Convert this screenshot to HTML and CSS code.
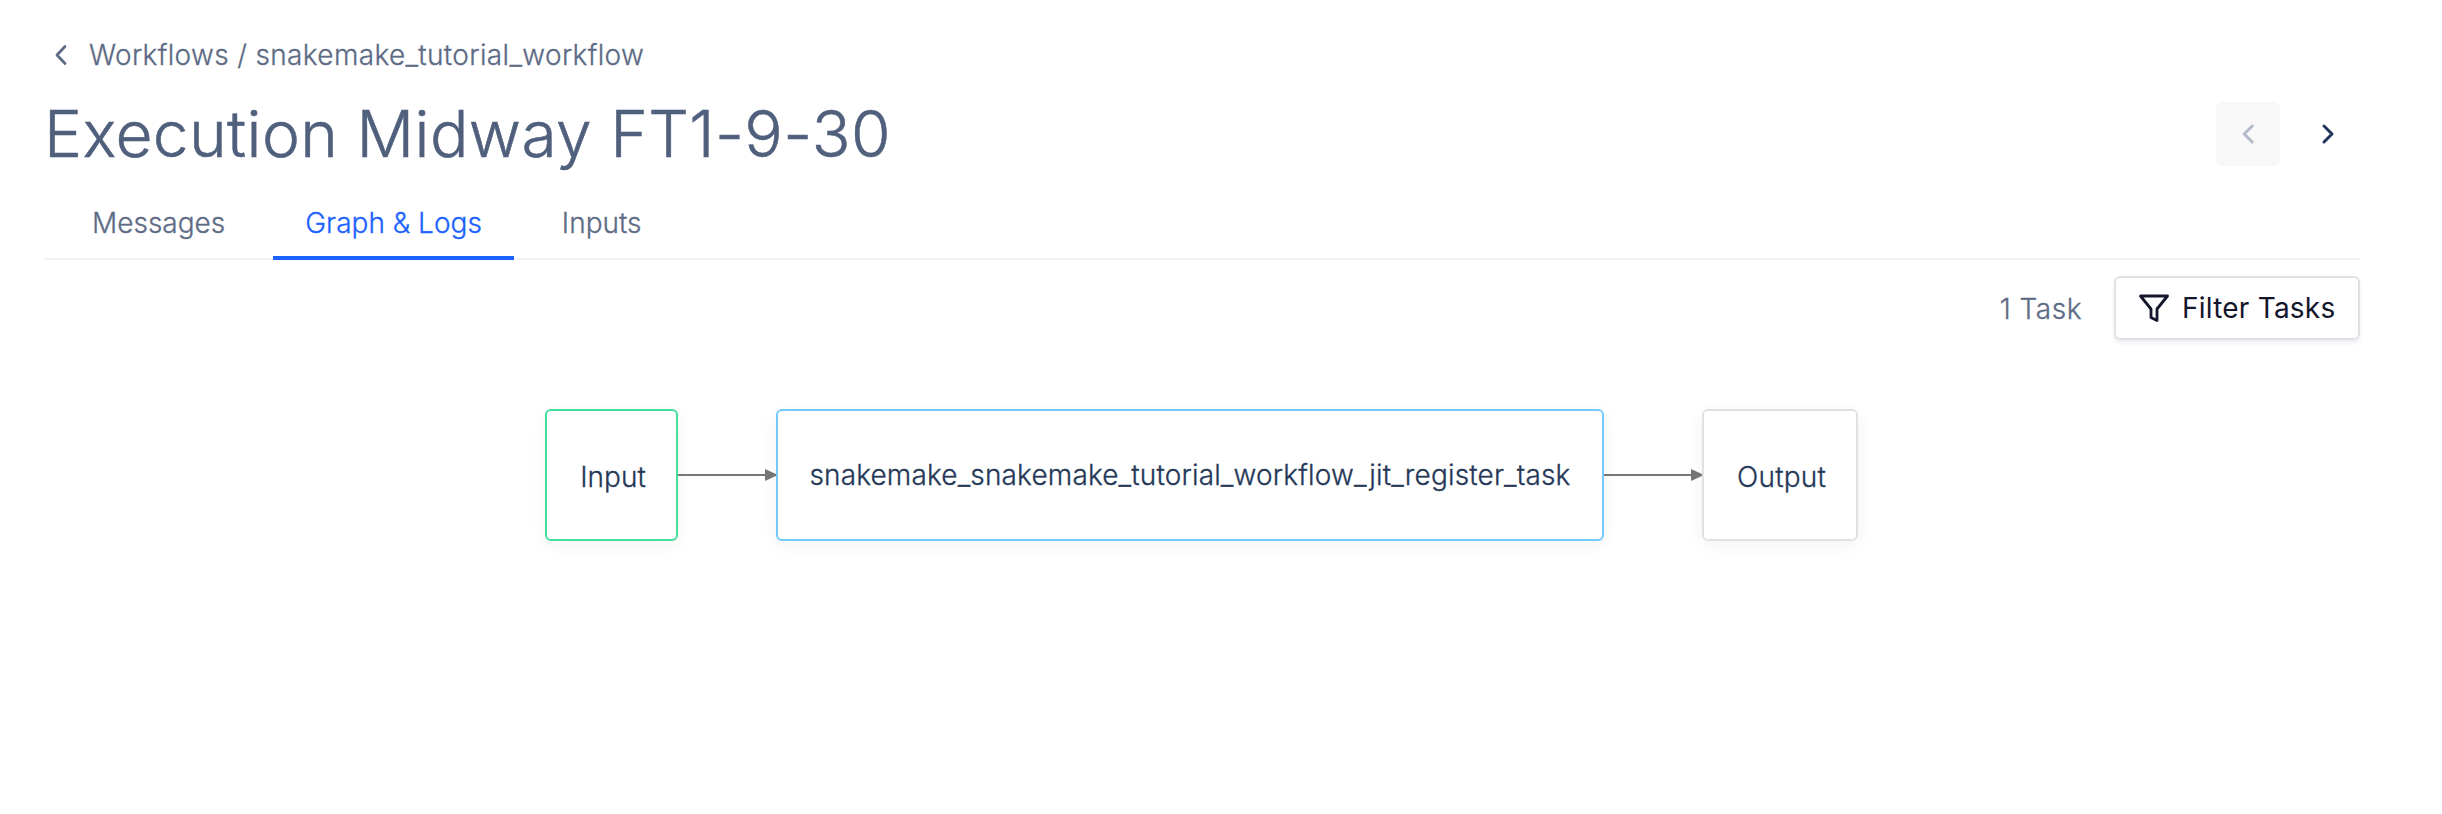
FILE: index.html
```html
<!DOCTYPE html>
<html lang="en">
<head>
<meta charset="utf-8">
<title>Execution Midway FT1-9-30</title>
<link rel="stylesheet" href="styles.css">
</head>
<body>
<main class="page">
  <nav class="breadcrumb">
    <svg class="back" width="14" height="22" viewBox="0 0 14 22"><path d="M12 2.500 4 11l8 8.500"/></svg>
    <span class="crumbs">Workflows / snakemake_tutorial_workflow</span>
  </nav>
  <header class="header">
    <h1 class="title">Execution Midway FT1-9-30</h1>
    <div class="pager">
      <button class="pager-btn disabled" aria-label="Previous"><svg width="16" height="24" viewBox="0 0 16 24"><path d="M12.200 4 4.200 12l8 8"/></svg></button>
      <button class="pager-btn" aria-label="Next"><svg width="16" height="24" viewBox="0 0 16 24"><path d="M4 4l8 8-8 8"/></svg></button>
    </div>
  </header>
  <div class="tabs">
    <a class="tab">Messages</a>
    <a class="tab active">Graph &amp; Logs</a>
    <a class="tab">Inputs</a>
  </div>
  <div class="toolbar">
    <span class="count">1 Task</span>
    <button class="filter">
      <svg width="32" height="30" viewBox="0 0 32 30"><path d="M2.500 3h27L19 16v11.500l-6-3V16z"/></svg>
      <span class="filter-label">Filter Tasks</span>
    </button>
  </div>
  <section class="graph">
    <div class="node input"><span>Input</span></div>
    <svg class="edge" width="98" height="14" viewBox="0 0 98 14"><path class="line" d="M0 7h90"/><path class="head" d="M87 1l13 6-13 6z"/></svg>
    <div class="node task"><span>snakemake_snakemake_tutorial_workflow_jit_register_task</span></div>
    <svg class="edge" width="98" height="14" viewBox="0 0 98 14"><path class="line" d="M0 7h90"/><path class="head" d="M87 1l13 6-13 6z"/></svg>
    <div class="node output"><span>Output</span></div>
  </section>
</main>
</body>
</html>
```
FILE: styles.css
```css
* { box-sizing: border-box; }
body {
  margin: 0;
  background: #fff;
  font-family: Inter, "Liberation Sans", sans-serif;
  font-size: 28px;
  font-weight: 300;
  color: #5d6b85;
  -webkit-text-stroke: .3px;
}
svg { display: block; flex: none; fill: none; }
button { font: inherit; padding: 0; border: 0; background: none; }
.page { height: 814px; padding: 0 82px 0 44px; overflow: hidden; }
.breadcrumb { display: flex; align-items: center; height: 40px; margin-top: 35px; padding-left: 9px; gap: 22px; letter-spacing: .34px; }
.back { stroke: #5d6b85; stroke-width: 2.800; stroke-linecap: round; stroke-linejoin: round; }
.header { display: flex; justify-content: space-between; align-items: center; height: 80px; margin-top: 19px; }
.title { margin: 0; font-size: 64px; font-weight: 300; line-height: 80px; letter-spacing: .38px; color: #50607c; -webkit-text-stroke: .5px; }
.pager { display: flex; gap: 16px; }
.pager-btn { width: 64px; height: 64px; display: flex; align-items: center; justify-content: center; border-radius: 6px; stroke: #20355a; stroke-width: 3; stroke-linecap: round; stroke-linejoin: round; }
.pager-btn.disabled { background: #f8f8f8; stroke: #b3bbc9; }
.tabs { display: flex; gap: 16px; height: 76px; margin-top: 10px; padding-left: 16px; border-bottom: 2px solid #f0f0f6; }
.tab { height: 76px; padding: 0 32px; line-height: 78px; }
.tab.active { color: #1b62ff; border-bottom: 4px solid #1b62ff; }
.toolbar { display: flex; justify-content: flex-end; align-items: center; gap: 32px; margin-top: 16px; height: 64px; }
.count { padding-top: 2px; letter-spacing: .5px; }
.filter { display: flex; align-items: center; gap: 12px; width: 246px; height: 64px; padding-left: 22px; border: 2px solid #dfe1e7; border-radius: 6px; box-shadow: 0 3px 4px rgba(20, 30, 50, .07); color: #14162b; font-weight: 400; letter-spacing: .22px; -webkit-text-stroke: 0; }
.filter svg { stroke: #14162b; stroke-width: 2.800; stroke-linejoin: round; }
.graph { display: flex; align-items: center; margin: 69px 0 0 501px; }
.node { flex: none; display: flex; align-items: center; justify-content: center; height: 132px; border: 2px solid; border-radius: 6px; box-shadow: 0 4px 16px rgba(20, 40, 50, .06); background: #fff; }
.node span { color: #253858; }
.input { width: 133px; padding: 3px 0 0 3px; border-color: #45df9c; }
.task { width: 828px; letter-spacing: .15px; border-color: #73caff; }
.output { width: 156px; padding: 3px 0 0 3px; letter-spacing: .2px; border-color: #dfe1e7; }
.edge { overflow: visible; }
.edge .line { stroke: #777; stroke-width: 2; }
.edge .head { fill: #777; }
```
